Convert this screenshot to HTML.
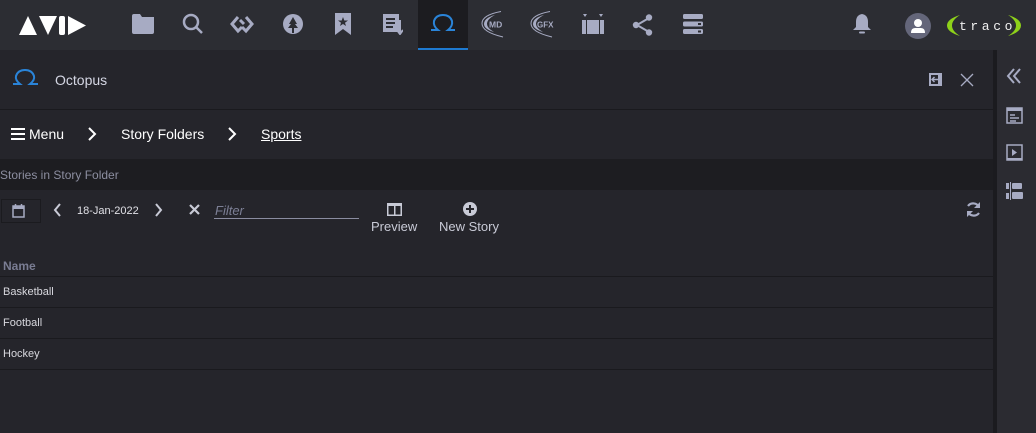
<!DOCTYPE html>
<html><head><meta charset="utf-8"><style>
*{margin:0;padding:0;box-sizing:border-box}
body{width:1036px;height:433px;background:#25252b;font-family:"Liberation Sans",sans-serif;position:relative;overflow:hidden;color:#fff}
.a{position:absolute}
.ic{fill:#a7abc3}
.t{font-size:13px;color:#d8d8de}
</style></head><body>
<div class="a" style="left:0;top:0;width:1036px;height:50px;background:#2c2d33"></div>
<div class="a" style="left:418px;top:0;width:50px;height:50px;background:#1c1c20;border-bottom:2px solid #1e7ad0"></div>
<!-- AVID logo -->
<svg class="a" style="left:18px;top:13px" width="70" height="24" viewBox="0 0 70 24">
<path d="M1 22 L10 3 L19 22Z" fill="#fff"/><path d="M21 3 L30 22 L39 3Z" fill="#fff"/><rect x="41" y="3" width="6" height="19" rx="2" fill="#fff"/><path d="M50 3 L50 22 L68 12.5Z" fill="#fff"/>
</svg>
<svg class="a" style="left:132px;top:14px" width="22" height="20"><path class="ic" d="M0 2 Q0 0 2 0 H8 L10 3 H22 V18 Q22 20 20 20 H2 Q0 20 0 18Z"/></svg>
<svg class="a" style="left:182px;top:13px" width="22" height="22"><circle cx="9" cy="9" r="7" fill="none" stroke="#a7abc3" stroke-width="2.5"/><path d="M14 14 L20 20" stroke="#a7abc3" stroke-width="2.5"/></svg>
<svg class="a" style="left:229px;top:13px" width="26" height="22"><path d="M9 4 L3 11 L9 18 L13 14 M17 4 L23 11 L17 18 L13 14 M11 7 L15 11" fill="none" stroke="#a7abc3" stroke-width="3"/></svg>
<svg class="a" style="left:283px;top:14px" width="20" height="20"><circle cx="10" cy="10" r="10" class="ic"/><path d="M10 3 L6 10 H8 L5 14 H9 V19 H11 V14 H15 L12 10 H14Z" fill="#2c2d33"/></svg>
<svg class="a" style="left:335px;top:13px" width="16" height="22"><path class="ic" d="M0 0 H16 V22 L8 16 L0 22Z"/><path d="M8 4 L9.3 7.5 H13 L10 9.7 L11 13 L8 11 L5 13 L6 9.7 L3 7.5 H6.7Z" fill="#2c2d33"/></svg>
<svg class="a" style="left:383px;top:14px" width="20" height="21"><rect width="16" height="18" class="ic"/><path d="M3 5 H12 M3 9 H12 M3 13 H10" stroke="#2c2d33" stroke-width="2"/><path d="M17 6 V18 M14 16 L17 20 L20 16" stroke="#a7abc3" stroke-width="2" fill="none"/></svg>
<svg class="a" style="left:430px;top:14px" width="26" height="18"><path d="M1 16 H8 Q3 12 4 7 Q6 1 13 1 Q20 1 22 7 Q23 12 18 16 H25" fill="none" stroke="#2a84d8" stroke-width="2"/></svg>
<!-- MD -->
<svg class="a" style="left:479px;top:10px" width="30" height="28"><path d="M22 1.5 Q3 5 3 13.5 Q3 22 24 27" fill="none" stroke="#a7abc3" stroke-width="1"/><path d="M16 5 Q5 8 5 14 Q5 19 15 22 Q8 18 8 14 Q8 9 16 5Z" fill="#a7abc3"/><text x="10" y="17.5" font-size="8.5" font-weight="bold" fill="#a7abc3" font-family="Liberation Sans">MD</text></svg>
<!-- GFX -->
<svg class="a" style="left:528px;top:10px" width="34" height="28"><path d="M22 1.5 Q3 5 3 13.5 Q3 22 24 27" fill="none" stroke="#a7abc3" stroke-width="1"/><path d="M16 5 Q5 8 5 14 Q5 19 15 22 Q8 18 8 14 Q8 9 16 5Z" fill="#a7abc3"/><text x="9" y="17.5" font-size="8" font-weight="bold" fill="#a7abc3" font-family="Liberation Sans">GFX</text></svg>
<svg class="a" style="left:581px;top:14px" width="24" height="21"><path class="ic" d="M2 0 H6 L4 3Z M18 0 H22 L20 3Z"/><rect x="1" y="6" width="22" height="14" class="ic"/><rect x="5" y="6" width="1" height="14" fill="#2c2d33"/><rect x="18" y="6" width="1" height="14" fill="#2c2d33"/></svg>
<svg class="a" style="left:632px;top:14px" width="22" height="22"><path d="M17 4 L5 11 L17 18" stroke="#a7abc3" stroke-width="2" fill="none"/><circle cx="17" cy="3.5" r="3.2" class="ic"/><circle cx="4" cy="11" r="3.2" class="ic"/><circle cx="17" cy="18.5" r="3.2" class="ic"/></svg>
<svg class="a" style="left:683px;top:14px" width="21" height="21"><rect y="0" width="20" height="5" rx="1.5" class="ic"/><rect y="7.5" width="20" height="5" rx="1.5" class="ic"/><rect y="15" width="20" height="5" rx="1.5" class="ic"/><rect x="15" y="9" width="3" height="2" fill="#2c2d33"/><rect x="15" y="16.5" width="3" height="2" fill="#2c2d33"/></svg>
<svg class="a" style="left:852px;top:13px" width="20" height="22"><path class="ic" d="M10 1 Q4 2 4 9 V14 L1 17 H19 L16 14 V9 Q16 2 10 1Z"/><rect x="7" y="18.5" width="6" height="2" rx="1" class="ic"/></svg>
<svg class="a" style="left:905px;top:13px" width="26" height="26"><circle cx="13" cy="13" r="13" fill="#64667a"/><circle cx="13" cy="10" r="4" fill="#fff"/><path d="M6 20 Q6 15 10 15 H16 Q20 15 20 20Z" fill="#fff"/></svg>
<!-- traco -->
<svg class="a" style="left:946px;top:12px" width="76" height="28">
<path d="M14 3 Q1 7 1 13.5 Q1 20 14 24 Q6 19 6 13.5 Q6 8 14 3Z" fill="#8ed11a"/>
<path d="M62 3 Q75 7 75 13.5 Q75 20 62 24 Q70 19 70 13.5 Q70 8 62 3Z" fill="#8ed11a"/>
<text x="13" y="18" font-size="13" fill="#f0f0f0" letter-spacing="3.6" font-family="Liberation Mono">traco</text></svg>

<!-- right sidebar -->
<div class="a" style="left:993px;top:50px;width:4px;height:383px;background:#1b1b1f"></div>
<div class="a" style="left:997px;top:50px;width:39px;height:383px;background:#2b2b31"></div>
<svg class="a" style="left:1006px;top:68px" width="16" height="16"><path d="M8 1 L2 8 L8 15 M14 1 L8 8 L14 15" stroke="#a7abc3" stroke-width="2" fill="none"/></svg>
<svg class="a" style="left:1006px;top:107px" width="17" height="17"><rect x="1" y="1" width="15" height="15" fill="none" stroke="#a7abc3" stroke-width="1.5"/><rect x="1" y="1" width="15" height="3" class="ic"/><path d="M4 8 H9 M4 11 H13 M4 14 H10" stroke="#a7abc3" stroke-width="1.5"/></svg>
<svg class="a" style="left:1006px;top:144px" width="17" height="17"><rect x="1" y="1" width="15" height="15" fill="none" stroke="#a7abc3" stroke-width="1.5"/><path d="M6 5 L11 8.5 L6 12Z" class="ic"/><rect x="1" y="14" width="15" height="2" class="ic"/></svg>
<svg class="a" style="left:1006px;top:182px" width="17" height="18"><rect x="0" y="1" width="3" height="6" class="ic"/><rect x="0" y="11" width="3" height="6" class="ic"/><rect x="4" y="0" width="1" height="18" class="ic"/><rect x="6" y="1" width="10" height="6" rx="1" class="ic"/><rect x="6" y="10" width="11" height="7" rx="1" class="ic"/></svg>

<!-- panel header -->
<svg class="a" style="left:12px;top:69px" width="28" height="17"><path d="M1 15 H8 Q3 11 4 7 Q6 1 13 1 Q20 1 22 7 Q23 11 18 15 H26" fill="none" stroke="#2a84d8" stroke-width="2"/></svg>
<div class="a" style="left:55px;top:72px;font-size:14px;color:#d5d7e4">Octopus</div>
<svg class="a" style="left:929px;top:73px" width="13" height="13"><rect x="0" y="0" width="13" height="13" class="ic"/><rect x="2" y="2" width="7" height="9" fill="#25252b"/><path d="M3 6.5 H9 M5.5 4 L3 6.5 L5.5 9" stroke="#a7abc3" stroke-width="1.5" fill="none"/></svg>
<svg class="a" style="left:960px;top:73px" width="14" height="14"><path d="M1 1 L13 13 M13 1 L1 13" stroke="#a7abc3" stroke-width="1.3"/></svg>
<div class="a" style="left:0;top:109px;width:993px;height:1px;background:#1a1a1e"></div>

<!-- breadcrumb -->
<svg class="a" style="left:11px;top:128px" width="14" height="12"><path d="M0 1 H14 M0 6 H14 M0 11 H14" stroke="#fff" stroke-width="2"/></svg>
<div class="a" style="left:29px;top:126px;font-size:14px">Menu</div>
<svg class="a" style="left:87px;top:126px" width="10" height="16"><path d="M2 2 L8 8 L2 14" stroke="#fff" stroke-width="2" fill="none"/></svg>
<div class="a" style="left:121px;top:126px;font-size:14px">Story Folders</div>
<svg class="a" style="left:227px;top:126px" width="10" height="16"><path d="M2 2 L8 8 L2 14" stroke="#fff" stroke-width="2" fill="none"/></svg>
<div class="a" style="left:261px;top:126px;font-size:14px;text-decoration:underline">Sports</div>

<div class="a" style="left:0;top:159px;width:993px;height:31px;background:#1d1d21"></div>
<div class="a" style="left:0;top:168px;font-size:12px;color:#8c8ea0">Stories in Story Folder</div>

<!-- toolbar -->
<div class="a" style="left:1px;top:199px;width:40px;height:24px;border:1px solid #1b1b1f"></div>
<svg class="a" style="left:12px;top:203px" width="13" height="15"><rect x="1" y="3" width="11" height="11" fill="none" stroke="#a7abc3" stroke-width="1.5"/><rect x="1" y="3" width="11" height="3" class="ic"/><path d="M3.5 1 V4 M9.5 1 V4" stroke="#a7abc3" stroke-width="1.5"/></svg>
<svg class="a" style="left:53px;top:203px" width="10" height="14"><path d="M7 1 L2 7 L7 13" stroke="#c8cad6" stroke-width="2" fill="none"/></svg>
<div class="a" style="left:77px;top:205px;font-size:11px;color:#e0e0e6">18-Jan-2022</div>
<svg class="a" style="left:153px;top:203px" width="10" height="14"><path d="M3 1 L8 7 L3 13" stroke="#c8cad6" stroke-width="2" fill="none"/></svg>
<svg class="a" style="left:189px;top:204px" width="11" height="11"><path d="M1 1 L10 10 M10 1 L1 10" stroke="#c8cad6" stroke-width="2.2"/></svg>
<div class="a" style="left:215px;top:203px;font-size:13px;font-style:italic;color:#7c7f95">Filter</div>
<div class="a" style="left:214px;top:218px;width:145px;height:1px;background:#8a8ca0"></div>
<svg class="a" style="left:387px;top:203px" width="15" height="13"><rect x="0.75" y="0.75" width="13.5" height="11.5" fill="none" stroke="#c8cad6" stroke-width="1.5"/><rect x="0" y="0" width="15" height="3" fill="#c8cad6"/><rect x="7" y="0" width="1.5" height="13" fill="#c8cad6"/></svg>
<div class="a" style="left:371px;top:219px;font-size:13px;color:#c8cad6">Preview</div>
<svg class="a" style="left:463px;top:202px" width="14" height="14"><circle cx="7" cy="7" r="7" fill="#c8cad6"/><path d="M7 3 V11 M3 7 H11" stroke="#25252b" stroke-width="2"/></svg>
<div class="a" style="left:439px;top:219px;font-size:13px;color:#c8cad6">New Story</div>
<svg class="a" style="left:965px;top:201px" width="17" height="17"><path d="M14 6 A6.5 6.5 0 0 0 3 5 M3 11 A6.5 6.5 0 0 0 14 12" stroke="#a7abc3" stroke-width="2.2" fill="none"/><path d="M15 1 V7 H9Z M2 16 V10 H8Z" class="ic"/></svg>

<!-- table -->
<div class="a" style="left:3px;top:259px;font-size:12px;font-weight:bold;color:#7a7d93">Name</div>
<div class="a" style="left:0;top:276px;width:993px;height:1px;background:#1a1a1e"></div>
<div class="a t" style="left:3px;top:286px;font-size:11px">Basketball</div>
<div class="a" style="left:0;top:307px;width:993px;height:1px;background:#1a1a1e"></div>
<div class="a t" style="left:3px;top:317px;font-size:11px">Football</div>
<div class="a" style="left:0;top:338px;width:993px;height:1px;background:#1a1a1e"></div>
<div class="a t" style="left:3px;top:348px;font-size:11px">Hockey</div>
<div class="a" style="left:0;top:369px;width:993px;height:1px;background:#1a1a1e"></div>
</body></html>
